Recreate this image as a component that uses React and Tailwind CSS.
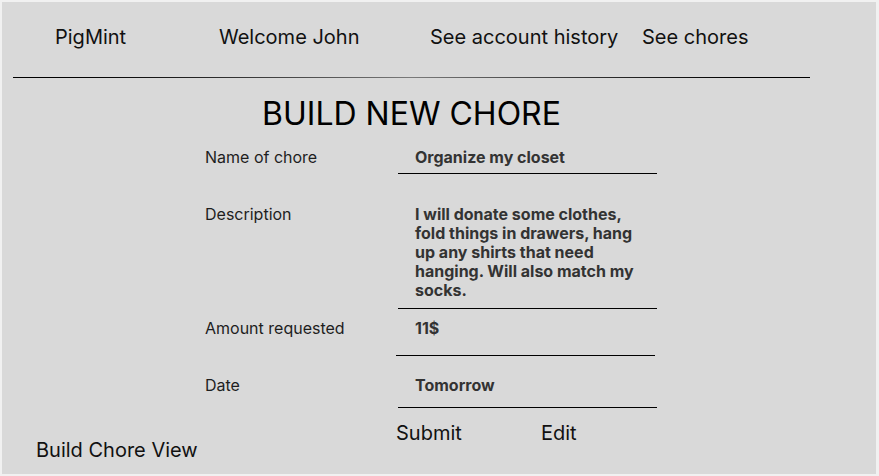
const font = { fontFamily: 'Inter, "Noto Sans", sans-serif' }

const navItems = [
  { label: 'PigMint', width: 'w-[164px]' },
  { label: 'Welcome John', width: 'w-[211px]' },
  { label: 'See account history', width: 'w-[212px]' },
  { label: 'See chores', width: '' },
]

const Row = ({ label, children, className, valueClass }) => (
  <div className={`flex ${className}`}>
    <div className="w-[193px] text-[16px] leading-[19px] text-[#1e1e1e]">{label}</div>
    <div className={`w-[259px] pl-[17px] border-b border-black text-[16px] leading-[19px] font-bold text-[#333333] ${valueClass}`}>
      {children}
    </div>
  </div>
)

export default function App() {
  return (
    <div className="min-h-screen bg-[#f1f1f1] pt-[2px] pl-[2px]" style={font}>
      <div className="w-[874px] h-[472px] bg-[#d9d9d9] overflow-hidden">
        {/* nav */}
        <nav className="flex pt-[23px] pl-[53px] text-[20px] leading-[24px] text-[#111111]">
          {navItems.map((item) => (
            <span key={item.label} className={item.width}>{item.label}</span>
          ))}
        </nav>
        <div className="ml-[11px] mt-[28px] w-[797px] h-px bg-gradient-to-r from-black via-[#7a7a7a] to-black" />

        <div className="w-[797px] ml-[11px]">
          <h1 className="mt-[16px] text-center text-[32px] leading-[40px] text-black">BUILD NEW CHORE</h1>
        </div>

        {/* form */}
        <div className="pl-[203px]">
          <Row label="Name of chore" className="mt-[14px]" valueClass="pb-[6px]">
            Organize my closet
          </Row>
          <Row label="Description" className="mt-[31px]" valueClass="pb-[8px]">
            I will donate some clothes,<br />
            fold things in drawers, hang<br />
            up any shirts that need<br />
            hanging. Will also match my<br />
            socks.
          </Row>
          <Row label="Amount requested" className="mt-[10px]" valueClass="pb-[17px] -ml-[2px] pl-[19px]">
            11$
          </Row>
          <Row label="Date" className="mt-[20px]" valueClass="pb-[12px]">
            Tomorrow
          </Row>
        </div>

        {/* bottom */}
        <div className="flex items-start mt-[13px] text-[20px] leading-[24px] text-[#111111]">
          <span className="ml-[34px] mt-[17px] w-[360px]">Build Chore View</span>
          <button className="w-[145px] text-left">Submit</button>
          <button className="text-left">Edit</button>
        </div>
      </div>
    </div>
  )
}
